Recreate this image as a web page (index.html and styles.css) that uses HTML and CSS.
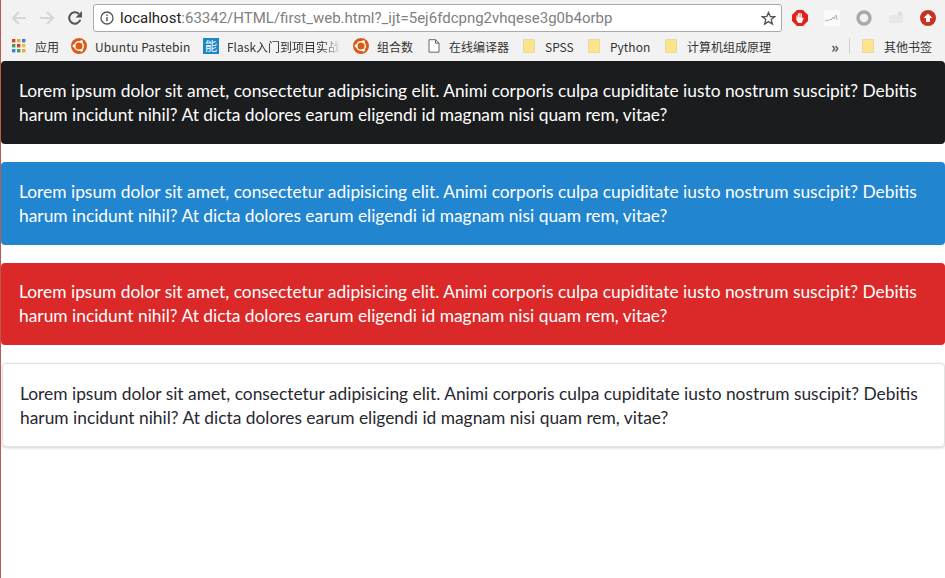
FILE: index.html
```html
<!DOCTYPE html>
<html lang="en">
<head>
<meta charset="utf-8">
<title>first_web</title>
<link rel="stylesheet" href="styles.css">
</head>
<body>
<div class="chrome">
  <div class="toolbar">
    <svg class="nav" viewBox="0 0 16 16" width="16" height="16"><path d="M15 8H2.500M8 2 2 8l6 6" fill="none" stroke="#d6d6d6" stroke-width="2"/></svg>
    <svg class="nav" viewBox="0 0 16 16" width="16" height="16"><path d="M1 8h12.500M8 2l6 6-6 6" fill="none" stroke="#d6d6d6" stroke-width="2"/></svg>
    <svg class="nav" viewBox="0 0 16 16" width="16" height="16"><path d="M13.300 9.800A5.700 5.700 0 1 1 12 4" fill="none" stroke="#555" stroke-width="2"/><path d="M15 1v6.400H8.600z" fill="#555"/></svg>
    <div class="omnibox">
      <svg class="info" viewBox="0 0 14 14" width="14" height="14"><circle cx="7" cy="7" r="6" fill="none" stroke="#555" stroke-width="1.300"/><path d="M7 6v4.200M7 3.600V5" stroke="#555" stroke-width="1.400"/></svg>
      <span class="url"><span class="host">localhost</span>:63342/HTML/first_web.html?_ijt=5ej6fdcpng2vhqese3g0b4orbp</span>
      <svg class="star" viewBox="0 0 16 16" width="15" height="15"><path d="M8 1.600 9.900 6h4.700l-3.700 3.100 1.200 4.800L8 11.300l-4.100 2.600 1.200-4.800L1.400 6h4.700z" fill="none" stroke="#555" stroke-width="1.400"/></svg>
    </div>
    <div class="exts">
      <svg viewBox="0 0 16 16" width="16" height="16"><path d="M5 0h6l5 5v6l-5 5H5l-5-5V5z" fill="#e0221c"/><path d="M4.400 10V5.500h1V7.500h.4V3.300h1.100v4.200h.4V2.800h1.100v4.700h.4V3.500h1.100v5l1-1.100.8.500-1.900 5H6.200z" fill="#fff"/></svg>
      <svg viewBox="0 0 16 16" width="16" height="16"><rect width="16" height="16" fill="#fafafa"/><path d="M1 11l2-1 1 1 2-2 1 1 2-3 1 2 2-4 1 5" fill="none" stroke="#b5b5b5" stroke-width="1"/></svg>
      <svg viewBox="0 0 16 16" width="16" height="16"><circle cx="8" cy="8" r="6" fill="none" stroke="#a9a9a9" stroke-width="3.400"/></svg>
      <svg viewBox="0 0 16 16" width="16" height="16"><path d="M1 13V7l2-2h8V3h4v10z" fill="#e8e8e8"/><circle cx="12" cy="3.500" r="2" fill="#dcdcdc"/></svg>
      <svg viewBox="0 0 16 16" width="16" height="16"><circle cx="8" cy="8" r="8" fill="#c8321f"/><path d="M8 3.500 12.500 8H10v4H6V8H3.500z" fill="#fff"/></svg>
    </div>
  </div>
  <div class="bookmarks">
    <span class="bm apps"><svg viewBox="0 0 14 14" width="14" height="14"><rect x="0" y="0" width="3.400" height="3.400" fill="#d9402e"/><rect x="5" y="0" width="3.400" height="3.400" fill="#e8a93a"/><rect x="10" y="0" width="3.400" height="3.400" fill="#3f7fd8"/><rect x="0" y="5" width="3.400" height="3.400" fill="#3f9f52"/><rect x="5" y="5" width="3.400" height="3.400" fill="#d9402e"/><rect x="10" y="5" width="3.400" height="3.400" fill="#e8c33a"/><rect x="0" y="10" width="3.400" height="3.400" fill="#3f7fd8"/><rect x="5" y="10" width="3.400" height="3.400" fill="#3f9f52"/><rect x="10" y="10" width="3.400" height="3.400" fill="#e8a93a"/></svg>应用</span>
    <span class="bm w-ub"><svg viewBox="0 0 16 16" width="16" height="16"><circle cx="8" cy="8" r="8" fill="#dd5a14"/><circle cx="8" cy="8" r="4.300" fill="none" stroke="#fff" stroke-width="1.500"/><circle cx="3" cy="8" r="1.400" fill="#fff"/><circle cx="10.500" cy="3.700" r="1.400" fill="#fff"/><circle cx="10.500" cy="12.300" r="1.400" fill="#fff"/></svg><span class="wide">Ubuntu Pastebin</span></span>
    <span class="bm w-fl"><span class="neng">能</span><span class="fade">Flask入门到项目实战</span></span>
    <span class="bm w-zh"><svg viewBox="0 0 16 16" width="16" height="16"><circle cx="8" cy="8" r="8" fill="#dd5a14"/><circle cx="8" cy="8" r="4.300" fill="none" stroke="#fff" stroke-width="1.500"/><circle cx="3" cy="8" r="1.400" fill="#fff"/><circle cx="10.500" cy="3.700" r="1.400" fill="#fff"/><circle cx="10.500" cy="12.300" r="1.400" fill="#fff"/></svg>组合数</span>
    <span class="bm w-bi"><svg viewBox="0 0 12 14" width="12" height="14"><path d="M1 .7h6.500L11 4.200v9H1zM7.500.7v3.500H11" fill="#fff" stroke="#666" stroke-width="1"/></svg>在线编译器</span>
    <span class="bm w-sp"><svg viewBox="0 0 12 14" width="12" height="14"><path d="M.5.500h11v13H.5z" fill="#fde48b" stroke="#e6d9a8"/></svg>SPSS</span>
    <span class="bm w-py"><svg viewBox="0 0 12 14" width="12" height="14"><path d="M.5.500h11v13H.5z" fill="#fde48b" stroke="#e6d9a8"/></svg>Python</span>
    <span class="bm w-jz"><svg viewBox="0 0 12 14" width="12" height="14"><path d="M.5.500h11v13H.5z" fill="#fde48b" stroke="#e6d9a8"/></svg>计算机组成原理</span>
    <span class="more">»</span>
    <span class="sep"></span>
    <span class="bm w-ot"><svg viewBox="0 0 12 14" width="12" height="14"><path d="M.5.500h11v13H.5z" fill="#fde48b" stroke="#e6d9a8"/></svg>其他书签</span>
  </div>
</div>
<main class="page">
  <div class="segment black">Lorem ipsum dolor sit amet, consectetur adipisicing elit. Animi corporis culpa cupiditate iusto nostrum suscipit? Debitis harum incidunt nihil? At dicta dolores earum eligendi id magnam nisi quam rem, vitae?</div>
  <div class="segment blue">Lorem ipsum dolor sit amet, consectetur adipisicing elit. Animi corporis culpa cupiditate iusto nostrum suscipit? Debitis harum incidunt nihil? At dicta dolores earum eligendi id magnam nisi quam rem, vitae?</div>
  <div class="segment red">Lorem ipsum dolor sit amet, consectetur adipisicing elit. Animi corporis culpa cupiditate iusto nostrum suscipit? Debitis harum incidunt nihil? At dicta dolores earum eligendi id magnam nisi quam rem, vitae?</div>
  <div class="segment plain">Lorem ipsum dolor sit amet, consectetur adipisicing elit. Animi corporis culpa cupiditate iusto nostrum suscipit? Debitis harum incidunt nihil? At dicta dolores earum eligendi id magnam nisi quam rem, vitae?</div>
</main>
</body>
</html>
```
FILE: styles.css
```css
* { box-sizing: border-box; }
html, body { margin: 0; height: 100%; }
body {
  background: #fff;
  border-left: 1px solid #c0584c;
  overflow: hidden;
  font-family: "Lato", sans-serif;
}
.chrome {
  height: 61px;
  background: #f2f2f2;
  display: flex;
  flex-direction: column;
}
.toolbar {
  height: 35px;
  flex: none;
  display: flex;
  align-items: center;
  padding: 1px 0 0 10px;
  gap: 12px;
}
.nav { flex: none; }
.omnibox {
  flex: none;
  width: 689px;
  height: 28px;
  margin-left: -2px;
  background: #fff;
  border: 1px solid #a9a9a9;
  border-radius: 3px;
  display: flex;
  align-items: center;
  padding: 0 5px 0 6px;
  font: 15px "Roboto", "Noto Sans", sans-serif;
  color: #808080;
}
.info { flex: none; margin-right: 6px; }
.url { flex: 1; white-space: nowrap; overflow: hidden; }
.host { color: #222; }
.star { flex: none; }
.exts {
  display: flex;
  align-items: center;
  gap: 16px;
  margin-left: -2px;
}
.bookmarks {
  height: 22px;
  display: flex;
  align-items: center;
  padding-left: 11px;
  font: 12px "Noto Sans CJK SC", "Noto Sans", sans-serif;
  color: #333;
  white-space: nowrap;
}
.bm { display: flex; align-items: center; gap: 10px; flex: none; }
.apps { width: 59px; gap: 9px; }
.w-ub { width: 132px; gap: 8px; }
.w-fl { width: 150px; gap: 8px; }
.w-zh { width: 75px; gap: 8px; }
.w-bi { width: 95px; gap: 9px; }
.w-sp { width: 65px; }
.w-py { width: 77px; }
.w-jz { width: 159px; }
.wide { letter-spacing: .14px; }
.neng {
  width: 16px; height: 16px; flex: none;
  background: #1b87c9; color: #fff;
  font-size: 12px; line-height: 16px; text-align: center;
}
.fade {
  -webkit-mask-image: linear-gradient(to right, #000 85%, transparent);
  mask-image: linear-gradient(to right, #000 85%, transparent);
}
.more { width: 22px; color: #555; font-size: 15px; font-weight: bold; flex: none; text-align: center; }
.sep { width: 1px; height: 16px; background: #d0d0d0; margin: 0 12px 0 3px; flex: none; }
.page { display: flex; flex-direction: column; gap: 18px; }
.segment {
  font-size: 17.360px;
  line-height: 24px;
  padding: 18px;
  border-radius: 4px;
  color: #fff;
}
.black { background: #1b1c1d; height: 83px; }
.blue { background: #2185d0; height: 83px; }
.red { background: #db2828; height: 82px; padding-top: 17px; }
.plain {
  height: 84px;
  margin-left: 1px;
  padding-left: 17px;
  background: #fff;
  color: #282830;
  border: 1px solid #e2e2e2;
  box-shadow: 0 1px 3px rgba(34,36,38,.2);
}
```
